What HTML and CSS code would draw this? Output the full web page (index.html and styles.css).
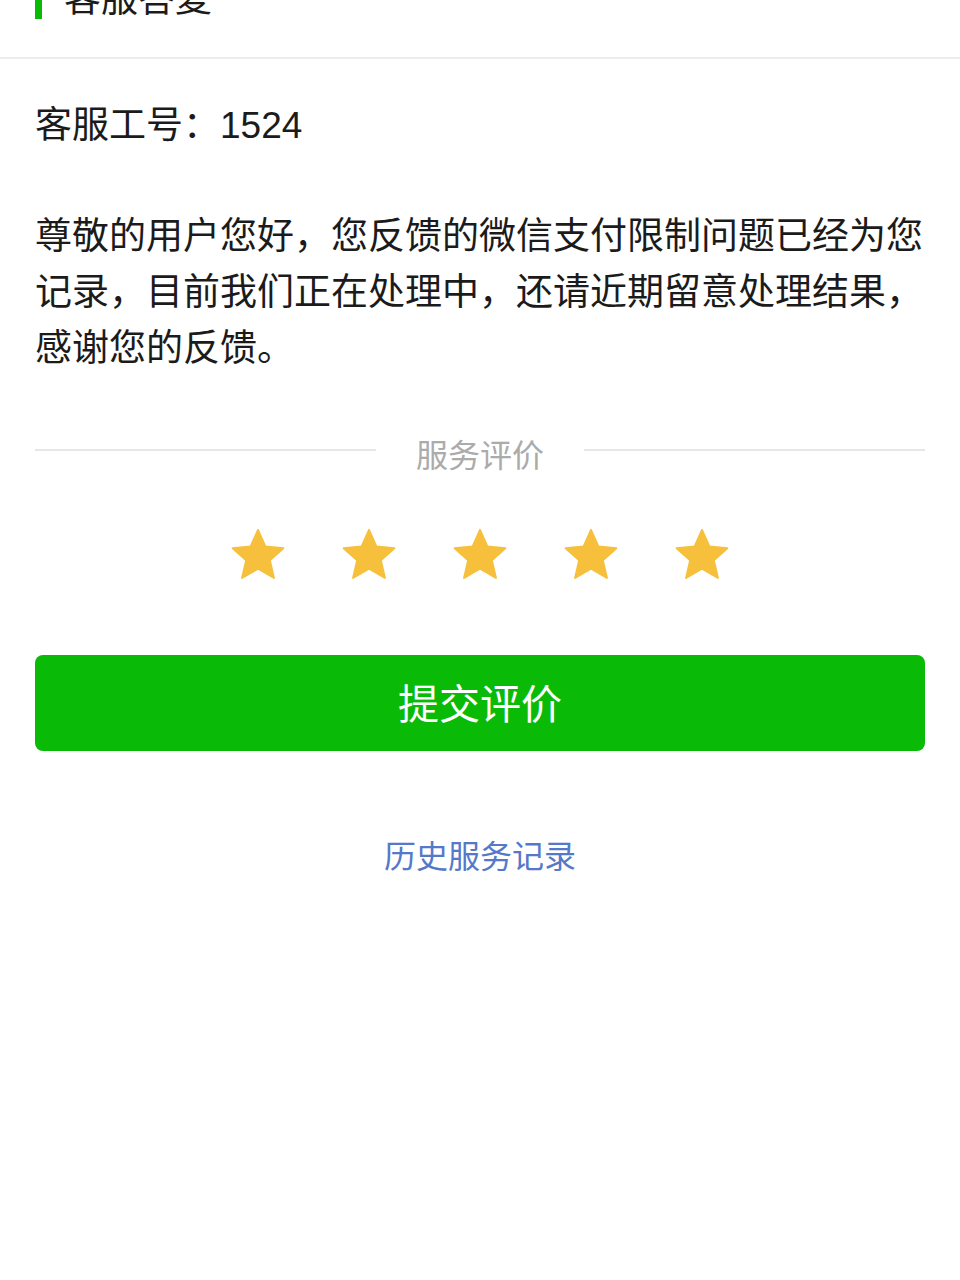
FILE: index.html
```html
<!DOCTYPE html>
<html lang="zh-CN">
<head>
<meta charset="utf-8">
<title>客服答复</title>
<link rel="stylesheet" href="styles.css">
</head>
<body>
<header class="header">
  <span class="header-bar"></span>
  <h1 class="header-title">客服答复</h1>
</header>
<main class="content">
  <p class="staff-id">客服工号：1524</p>
  <p class="reply">尊敬的用户您好，您反馈的微信支付限制问题已经为您记录，目前我们正在处理中，还请近期留意处理结果，感谢您的反馈。</p>
  <div class="divider">
    <span class="divider-line"></span>
    <span class="divider-text">服务评价</span>
    <span class="divider-line"></span>
  </div>
  <div class="stars">
    <svg class="star" viewBox="0 0 24 24"><path d="M12 1.6l3.1 6.9 7.4.7-5.6 5 1.7 7.3L12 17.7l-6.6 3.8 1.7-7.3-5.6-5 7.4-.7z"/></svg>
    <svg class="star" viewBox="0 0 24 24"><path d="M12 1.6l3.1 6.9 7.4.7-5.6 5 1.7 7.3L12 17.7l-6.6 3.8 1.7-7.3-5.6-5 7.4-.7z"/></svg>
    <svg class="star" viewBox="0 0 24 24"><path d="M12 1.6l3.1 6.9 7.4.7-5.6 5 1.7 7.3L12 17.7l-6.6 3.8 1.7-7.3-5.6-5 7.4-.7z"/></svg>
    <svg class="star" viewBox="0 0 24 24"><path d="M12 1.6l3.1 6.9 7.4.7-5.6 5 1.7 7.3L12 17.7l-6.6 3.8 1.7-7.3-5.6-5 7.4-.7z"/></svg>
    <svg class="star" viewBox="0 0 24 24"><path d="M12 1.6l3.1 6.9 7.4.7-5.6 5 1.7 7.3L12 17.7l-6.6 3.8 1.7-7.3-5.6-5 7.4-.7z"/></svg>
  </div>
  <button class="submit" type="button">提交评价</button>
  <a class="history" href="#">历史服务记录</a>
</main>
</body>
</html>
```
FILE: styles.css
```css
* { box-sizing: border-box; }
html, body {
  margin: 0;
  padding: 0;
  background: #ffffff;
}
body {
  width: 960px;
  min-height: 1280px;
  font-family: "Liberation Sans", "Noto Sans CJK SC", sans-serif;
  color: #1b1b1b;
  overflow: hidden;
}
.header {
  height: 117px;
  margin-top: -58px;
  display: flex;
  align-items: center;
  padding-left: 35px;
  border-bottom: 2px solid #ececec;
}
.header-bar {
  width: 7px;
  height: 40px;
  background: #09bb07;
  margin-right: 22px;
  margin-top: -2px;
}
.header-title {
  margin: 0;
  font-size: 37px;
  font-weight: normal;
  line-height: 40px;
  color: #1b1b1b;
}
.content {
  padding: 0 35px;
  display: flex;
  flex-direction: column;
}
.staff-id {
  margin: 39px 0 0;
  font-size: 37px;
  line-height: 56px;
}
.reply {
  margin: 55px 0 0;
  font-size: 37px;
  line-height: 56px;
  width: 890px;
}
.divider {
  margin-top: 63px;
  display: flex;
  align-items: center;
  gap: 40px;
}
.divider-line {
  flex: 1;
  height: 2px;
  background: #e6e6e6;
  margin-top: -12px;
}
.divider-text {
  font-size: 32px;
  line-height: 32px;
  color: #ababab;
}
.stars {
  margin-top: 54px;
  display: flex;
  justify-content: center;
  gap: 53px;
}
.star {
  width: 58px;
  height: 58px;
  fill: #f6c03c;
  stroke: #f6c03c;
  stroke-width: 0.8;
  stroke-linejoin: round;
}
.submit {
  margin-top: 71px;
  height: 96px;
  width: 100%;
  border: none;
  border-radius: 8px;
  background: #09bb07;
  color: #ffffff;
  font-family: "Liberation Sans", "Noto Sans CJK SC", sans-serif;
  font-size: 41px;
  padding: 0 0 5px;
}
.history {
  margin-top: 88px;
  align-self: center;
  font-size: 32px;
  line-height: 36px;
  color: #5678c9;
  text-decoration: none;
}
```
